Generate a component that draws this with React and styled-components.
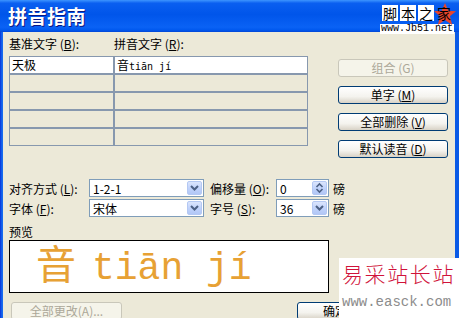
import React from "react";
import styled, { createGlobalStyle } from "styled-components";

const GlobalStyle = createGlobalStyle`
  html, body {
    margin: 0;
    padding: 0;
    background: #ffffff;
  }
  body {
    font-family: "Noto Sans CJK SC", "Liberation Sans", sans-serif;
  }
`;

const rows = [
  { base: "天极", pinyin: "音tiān jí" },
  { base: "", pinyin: "" },
  { base: "", pinyin: "" },
  { base: "", pinyin: "" },
  { base: "", pinyin: "" },
];

function Chevron() {
  return (
    <svg width="9" height="6" viewBox="0 0 9 6">
      <path d="M1 1 L4.5 4.5 L8 1" fill="none" stroke="#4d6185" strokeWidth="2" />
    </svg>
  );
}

function SpinArrows() {
  return (
    <svg width="9" height="12" viewBox="0 0 9 12">
      <path d="M1.5 5 L4.5 2 L7.5 5" fill="none" stroke="#4d6185" strokeWidth="1.6" />
      <path d="M1.5 7 L4.5 10 L7.5 7" fill="none" stroke="#4d6185" strokeWidth="1.6" />
    </svg>
  );
}

export default function App() {
  return (
    <>
      <GlobalStyle />
      <Window>
        <TitleBar>拼音指南</TitleBar>
        <Body>
          <TopSection>
            <PinyinColumn>
              <HeaderRow>
                <HeaderLabel $w={105}>
                  基准文字 (<u>B</u>):
                </HeaderLabel>
                <HeaderLabel>
                  拼音文字 (<u>R</u>):
                </HeaderLabel>
              </HeaderRow>
              <Grid>
                {rows.map((r, i) => (
                  <React.Fragment key={i}>
                    <Cell $active={i === 0}>{r.base}</Cell>
                    <Cell $active={i === 0}>
                      {r.pinyin && (
                        <>
                          音<Latin>tiān jí</Latin>
                        </>
                      )}
                    </Cell>
                  </React.Fragment>
                ))}
              </Grid>
            </PinyinColumn>
            <ButtonColumn>
              <Button disabled>组合 (G)</Button>
              <Button>
                单字 (<u>M</u>)
              </Button>
              <Button>
                全部删除 (<u>V</u>)
              </Button>
              <Button>
                默认读音 (<u>D</u>)
              </Button>
            </ButtonColumn>
          </TopSection>

          <OptionRows>
            <OptionRow>
              <OptLabel $w={80}>
                对齐方式 (<u>L</u>):
              </OptLabel>
              <Combo $w={115}>
                <ComboText>1-2-1</ComboText>
                <DropButton>
                  <Chevron />
                </DropButton>
              </Combo>
              <OptLabel $w={66} $ml={6}>
                偏移量 (<u>O</u>):
              </OptLabel>
              <Combo $w={53}>
                <ComboText>0</ComboText>
                <DropButton>
                  <SpinArrows />
                </DropButton>
              </Combo>
              <Unit>磅</Unit>
            </OptionRow>
            <OptionRow>
              <OptLabel $w={80}>
                字体 (<u>F</u>):
              </OptLabel>
              <Combo $w={115}>
                <ComboText>宋体</ComboText>
                <DropButton>
                  <Chevron />
                </DropButton>
              </Combo>
              <OptLabel $w={66} $ml={6}>
                字号 (<u>S</u>):
              </OptLabel>
              <Combo $w={53}>
                <ComboText>36</ComboText>
                <DropButton>
                  <Chevron />
                </DropButton>
              </Combo>
              <Unit>磅</Unit>
            </OptionRow>
          </OptionRows>

          <PreviewLabel>预览</PreviewLabel>
          <PreviewBox>
            <PreviewLine>
              <PreviewHan>音</PreviewHan>
              <PreviewPinyin>tiān jí</PreviewPinyin>
            </PreviewLine>
          </PreviewBox>

          <BottomRow>
            <Button disabled $w={111} $ml={2}>
              全部更改(A)...
            </Button>
            <Button $w={76} $ml={175}>
              确定
            </Button>
          </BottomRow>
        </Body>

        <Jb51Mark>
          <MarkChars>
            <MarkChar>脚</MarkChar>
            <MarkChar>本</MarkChar>
            <MarkChar>之</MarkChar>
            <MarkChar $logo>
              <LogoStar viewBox="0 0 20 20">
                <path
                  d="M10 0 L13 7 L20 7.5 L14.5 12 L16.5 20 L10 15.5 L3.5 20 L5.5 12 L0 7.5 L7 7 Z"
                  fill="#e8452c"
                />
              </LogoStar>
              <span>家</span>
            </MarkChar>
          </MarkChars>
          <MarkUrl>www.Jb51.net</MarkUrl>
        </Jb51Mark>

        <EasckMark>
          <EasckName>易采站长站</EasckName>
          <EasckUrl>www.easck.com</EasckUrl>
        </EasckMark>
      </Window>
    </>
  );
}

const Window = styled.div`
  position: relative;
  width: 459px;
  height: 318px;
  overflow: hidden;
  display: flex;
  flex-direction: column;
  background: linear-gradient(90deg, #0831d9 0px, #166aee 2px, #0a5ae6 100%);
`;

const TitleBar = styled.div`
  flex: none;
  height: 32px;
  box-sizing: border-box;
  padding: 0 0 2px 8px;
  display: flex;
  align-items: center;
  color: #ffffff;
  font-size: 19px;
  font-weight: bold;
  letter-spacing: 0.5px;
  text-shadow: 1px 1px #0a1883;
  background: linear-gradient(
    180deg,
    #3d95ff 0%,
    #0a5ff0 10%,
    #0055ea 45%,
    #0a62f5 85%,
    #0058ee 94%,
    #0346d6 100%
  );
`;

const Body = styled.div`
  flex: 1;
  margin: 0 4px 4px 3px;
  background: #ece9d8;
  padding: 5px 0 6px 6px;
  display: flex;
  flex-direction: column;
  font-size: 12px;
  color: #000000;
  box-shadow: 0 4px 0 #0831d9;
`;

const TopSection = styled.div`
  display: flex;
  gap: 30px;
`;

const PinyinColumn = styled.div`
  width: 299px;
  display: flex;
  flex-direction: column;
  gap: 5px;
`;

const HeaderRow = styled.div`
  display: flex;
  height: 14px;
  line-height: 14px;
`;

const HeaderLabel = styled.div`
  width: ${(p) => (p.$w ? `${p.$w}px` : "auto")};
  white-space: nowrap;
`;

const Grid = styled.div`
  display: grid;
  grid-template-columns: 103px 1fr;
  grid-template-rows: repeat(5, 1fr);
  gap: 2px;
  height: 90px;
  box-sizing: border-box;
  border: 1px solid #8798ae;
  background: #8798ae;
`;

const Cell = styled.div`
  background: ${(p) => (p.$active ? "#ffffff" : "#ece9d8")};
  padding-left: 2px;
  line-height: 16px;
  font-size: 12px;
  white-space: nowrap;
  overflow: hidden;
`;

const Latin = styled.span`
  font-family: "DejaVu Sans Mono", monospace;
  font-size: 10px;
`;

const ButtonColumn = styled.div`
  width: 110px;
  margin-top: 22px;
  display: flex;
  flex-direction: column;
  gap: 9px;
`;

const Button = styled.button`
  width: ${(p) => p.$w || 110}px;
  height: 18px;
  margin-left: ${(p) => p.$ml || 0}px;
  padding: 0;
  box-sizing: border-box;
  font-family: "Noto Sans CJK SC", "Liberation Sans", sans-serif;
  font-size: 12px;
  line-height: 16px;
  white-space: nowrap;
  border: 1px solid ${(p) => (p.disabled ? "#c9c7ba" : "#003c74")};
  border-radius: 3px;
  color: ${(p) => (p.disabled ? "#aca899" : "#000000")};
  background: ${(p) =>
    p.disabled
      ? "#f5f4ea"
      : "linear-gradient(180deg, #ffffff 0%, #f4f3ee 60%, #d8d2c6 100%)"};
`;

const OptionRows = styled.div`
  margin-top: 21px;
  display: flex;
  flex-direction: column;
  gap: 2px;
`;

const OptionRow = styled.div`
  display: flex;
  align-items: center;
  height: 18px;
`;

const OptLabel = styled.div`
  width: ${(p) => p.$w}px;
  margin-left: ${(p) => p.$ml || 0}px;
  white-space: nowrap;
`;

const Combo = styled.div`
  width: ${(p) => p.$w}px;
  height: 18px;
  box-sizing: border-box;
  border: 1px solid #7f9db9;
  background: #ffffff;
  display: flex;
  align-items: center;
  padding: 0 1px 0 3px;
`;

const ComboText = styled.span`
  flex: 1;
  font-family: "Noto Sans CJK SC", "Liberation Sans", sans-serif;
  font-size: 12px;
`;

const DropButton = styled.div`
  width: 15px;
  height: 14px;
  box-sizing: border-box;
  border: 1px solid #b4c8f3;
  border-radius: 2px;
  background: linear-gradient(180deg, #dbe5fd 0%, #c1d3fb 50%, #b2c7f6 100%);
  display: flex;
  align-items: center;
  justify-content: center;
`;

const Unit = styled.span`
  margin-left: 4px;
`;

const PreviewLabel = styled.div`
  margin-top: 8px;
  height: 14px;
  line-height: 14px;
`;

const PreviewBox = styled.div`
  margin-top: 1px;
  width: 320px;
  height: 53px;
  box-sizing: border-box;
  border: 1px solid #000000;
  background: #ffffff;
  overflow: hidden;
`;

const PreviewLine = styled.div`
  display: flex;
  align-items: baseline;
  padding: 0 0 0 26px;
  color: #e7a134;
  line-height: 42px;
`;

const PreviewHan = styled.span`
  font-size: 40px;
  font-family: "Noto Sans CJK SC", sans-serif;
  margin-right: 16px;
`;

const PreviewPinyin = styled.span`
  font-size: 38px;
  font-family: "Liberation Mono", monospace;
  white-space: pre;
`;

const BottomRow = styled.div`
  margin-top: 9px;
  display: flex;
`;

const Jb51Mark = styled.div`
  position: absolute;
  left: 380px;
  top: 5px;
  display: flex;
  flex-direction: column;
  align-items: center;
`;

const MarkChars = styled.div`
  display: flex;
  gap: 2px;
`;

const MarkChar = styled.div`
  position: relative;
  width: 16px;
  height: 16px;
  background: ${(p) => (p.$logo ? "transparent" : "#ffffff")};
  color: #000000;
  font-size: 14px;
  line-height: 16px;
  text-align: center;

  span {
    position: relative;
  }
`;

const LogoStar = styled.svg`
  position: absolute;
  left: -2px;
  top: -2px;
  width: 22px;
  height: 22px;
`;

const MarkUrl = styled.div`
  margin-top: 3px;
  background: #ffffff;
  font-family: "Liberation Mono", monospace;
  font-size: 10px;
  line-height: 10px;
  padding: 0 1px;
  color: #000000;
`;

const EasckMark = styled.div`
  position: absolute;
  left: 339px;
  top: 258px;
  width: 120px;
  height: 60px;
  background: #ffffff;
  display: flex;
  flex-direction: column;
  align-items: flex-start;
  padding-left: 3px;
  box-sizing: border-box;
`;

const EasckName = styled.div`
  margin-top: 2px;
  color: #d0123a;
  font-size: 21px;
  line-height: 26px;
  letter-spacing: 1.6px;
  font-weight: 300;
`;

const EasckUrl = styled.div`
  margin-top: 8px;
  color: #8c8c8c;
  font-family: "Liberation Mono", monospace;
  font-size: 14px;
  line-height: 16px;
`;
